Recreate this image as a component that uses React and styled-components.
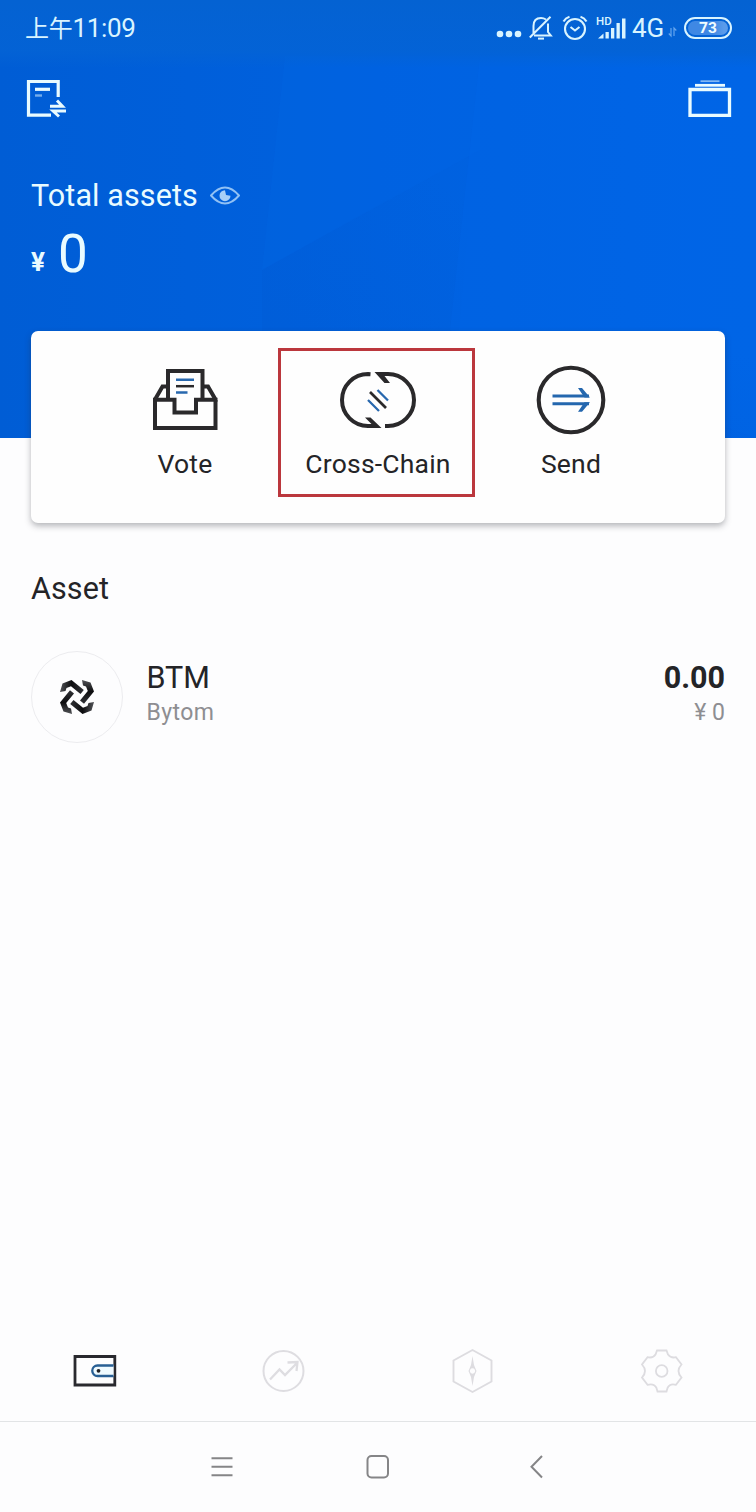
import React from 'react';
import styled, { createGlobalStyle } from 'styled-components';

const Global = createGlobalStyle`
  * { box-sizing: border-box; }
  body { margin: 0; background: #fdfdfe; font-family: Roboto, "Noto Sans CJK SC", sans-serif; color: #242427; }
  svg { display: block; flex: none; }
`;

const Screen = styled.div`
  width: 756px;
  height: 1512px;
  display: flex;
  flex-direction: column;
  background: #fdfdfe;
  overflow: hidden;
`;

const Hero = styled.header`
  position: relative;
  isolation: isolate;
  flex: none;
  height: 438px;
  display: flex;
  flex-direction: column;
  color: #e9fbff;
  background: #0061e0;
`;

const Facets = styled.svg`
  position: absolute;
  inset: 0;
  z-index: -1;
`;

const StatusBar = styled.div`
  height: 56px;
  padding: 0 24px 2px 25px;
  display: flex;
  align-items: center;
  justify-content: space-between;
`;

const Clock = styled.span`
  font-size: 26px;
  line-height: 30px;
  letter-spacing: -0.3px;
  color: #d9f4ff;
`;

const CjkPart = styled.span`
  font-family: "Noto Sans CJK SC", sans-serif;
  font-size: 24px;
`;

const StatusIcons = styled.div`
  padding-top: 1px;
  display: flex;
  align-items: center;
  color: #d9f4ff;
`;

const Network = styled.span`
  margin-left: 4px;
  width: 36px;
  font-size: 26px;
  line-height: 30px;
  font-weight: 400;
  white-space: nowrap;
`;

const SignalGroup = styled.div`
  position: relative;
  margin-left: 8px;
  width: 32px;
  height: 24px;
  display: flex;
  align-items: flex-end;
`;

const Hd = styled.span`
  position: absolute;
  left: 0;
  top: 0;
  font-size: 11.5px;
  line-height: 10px;
  font-weight: 500;
`;

const Battery = styled.div`
  margin-left: 7px;
  width: 48px;
  height: 22px;
  border: 2px solid #d9f4ff;
  border-radius: 11px;
  padding: 2px;
  display: flex;
`;

const Charge = styled.div`
  flex: 1;
  border-radius: 8px;
  background: linear-gradient(90deg, #3f88e4 60%, #5a9bea 90%);
  display: flex;
  align-items: center;
  justify-content: center;
  font-size: 15.5px;
  line-height: 14px;
  font-weight: 700;
  color: #f0fdff;
`;

const Toolbar = styled.div`
  margin-top: 23px;
  padding: 0 24px 0 26px;
  height: 40px;
  display: flex;
  justify-content: space-between;
`;

const Totals = styled.div`
  padding: 56px 31px 0;
`;

const TotalLabel = styled.div`
  display: flex;
  align-items: center;
  gap: 12px;
  height: 40px;
  font-size: 30.5px;
  letter-spacing: 0.1px;
`;

const TotalValue = styled.div`
  margin-top: 9px;
  display: flex;
  align-items: baseline;
  font-size: 53px;
  line-height: 60px;
`;

const Yen = styled.span`
  width: 27px;
  font-size: 26px;
  font-weight: 700;
  position: relative;
  top: -1px;
`;

const Card = styled.section`
  flex: none;
  position: relative;
  margin: -107px 31px 0;
  height: 192px;
  border-radius: 7px;
  background: #fefefe;
  box-shadow: 0 3px 6px rgba(40, 44, 52, 0.34);
  display: flex;
  justify-content: center;
`;

const Action = styled.div`
  position: relative;
  width: 193px;
  padding-top: 32px;
  display: flex;
  flex-direction: column;
  align-items: center;
  font-size: 26.5px;
  line-height: 30px;
  letter-spacing: 0.2px;
`;

const ActionIcon = styled.div`
  height: 74px;
  margin-bottom: 12px;
  display: flex;
  align-items: center;
`;

const Highlight = styled.div`
  position: absolute;
  left: -4px;
  top: 17px;
  width: 197px;
  height: 149px;
  border: 3px solid #bb373d;
`;

const AssetSection = styled.main`
  flex: 1;
  padding: 46px 31px 0;
`;

const SectionTitle = styled.h2`
  margin: 0;
  font-size: 30.5px;
  line-height: 40px;
  font-weight: 400;
  letter-spacing: 0.1px;
`;

const AssetRow = styled.div`
  margin-top: 42px;
  height: 92px;
  display: flex;
`;

const CoinBadge = styled.div`
  width: 92px;
  height: 92px;
  border: 1.5px solid #ececef;
  border-radius: 50%;
  display: flex;
  align-items: center;
  justify-content: center;
`;

const Stack = styled.div`
  padding-top: 7px;
  margin-left: ${(p) => (p.$end ? 'auto' : '23.5px')};
  display: flex;
  flex-direction: column;
  align-items: ${(p) => (p.$end ? 'flex-end' : 'flex-start')};
`;

const Primary = styled.span`
  font-size: 30.5px;
  line-height: 40px;
  font-weight: ${(p) => (p.$bold ? 700 : 400)};
`;

const Secondary = styled.span`
  font-size: 23px;
  line-height: 30px;
  letter-spacing: ${(p) => p.$tracking || 0}px;
  color: #8e8e92;
`;

const Tabs = styled.nav`
  height: 101px;
  display: grid;
  grid-template-columns: repeat(4, 1fr);
  align-items: center;
  justify-items: center;
  border-bottom: 1px solid #e2e4e6;
`;

const SystemNav = styled.footer`
  height: 90px;
  padding: 0 210px 1px 209px;
  display: grid;
  grid-template-columns: 1fr auto 1fr;
  align-items: center;

  & > :last-child {
    justify-self: end;
  }
`;

const Background = () => (
  <Facets width="756" height="438" viewBox="0 0 756 438">
    <defs>
      <linearGradient id="base" x1="0" y1="0" x2="1" y2="0">
        <stop offset="0" stopColor="#005dd5" />
        <stop offset="0.5" stopColor="#0061df" />
        <stop offset="1" stopColor="#0064e5" />
      </linearGradient>
      <linearGradient id="top" x1="0" y1="0" x2="0" y2="1">
        <stop offset="0" stopColor="#0462d2" />
        <stop offset="0.75" stopColor="#0463d5" stopOpacity="0.85" />
        <stop offset="1" stopColor="#0463d5" stopOpacity="0" />
      </linearGradient>
      <linearGradient id="fold" x1="0" y1="1" x2="0.7" y2="0">
        <stop offset="0" stopColor="#0059d2" stopOpacity="0.4" />
        <stop offset="1" stopColor="#0059d2" stopOpacity="0" />
      </linearGradient>
    </defs>
    <path fill="url(#base)" d="M0 0h756v438H0z" />
    <path fill="url(#fold)" d="M262 270L475 150L450 438H262z" />
    <path fill="#0068ea" opacity=".22" d="M285 56H480V150L262 270z" />
    <path fill="#0068ec" opacity=".25" d="M480 56H756V438L450 330z" />
    <path fill="url(#fold)" opacity=".6" d="M475 415L640 345L756 335V438H475z" />
    <path fill="url(#top)" d="M0 0h756v68H0z" />
  </Facets>
);

const MutedBell = () => (
  <svg width="24" height="26" viewBox="0 0 24 26" fill="none" stroke="currentColor" strokeWidth="2">
    <path d="M4.500 18V11C4.500 5.500 7.500 3 12 3C14 3 15.600 3.600 17 4.500M19 8.500V17L21.800 20.500H5M.8 22.500L21.500 1.800" />
    <path d="M9 23.600H15" strokeWidth="2" />
  </svg>
);

const Alarm = () => (
  <svg width="26" height="26" viewBox="0 0 26 26" fill="none" stroke="currentColor" strokeWidth="2.100">
    <circle cx="13" cy="14" r="10" />
    <path d="M8.500 12L13 15.500L17.500 12M1.500 6.500Q3.500 3 7.500 1.800M24.500 6.500Q22.500 3 18.500 1.800" />
  </svg>
);

const Signal = () => (
  <svg width="32" height="22" viewBox="0 0 32 22" fill="currentColor">
    <path d="M2 20.500L7.500 15.500V20.500zM9.500 14h3.300v6.500H9.500zM15 10h3.300v10.500h-3.300zM20.500 5h3.300v15.500h-3.300zM26 .5h3.500v20h-3.500z" />
  </svg>
);

const RecordIcon = () => (
  <svg width="41" height="40" viewBox="0 0 41 40" fill="none" stroke="currentColor" strokeWidth="3.200">
    <path d="M25 36.200H2.500V2.500H32.200V18" />
    <path d="M9 10.300H24" />
    <path d="M9 16.500H16" opacity=".5" strokeWidth="2.400" />
    <path d="M24 27.200H36.500L31 21.500M40 32H27L33 37.500" strokeWidth="2.900" />
  </svg>
);

const WalletsIcon = () => (
  <svg width="44" height="40" viewBox="0 0 44 40" fill="none" stroke="currentColor">
    <path d="M2 10.500H41.500V36.300H2z" strokeWidth="3.300" />
    <path d="M7 6.300H37" strokeWidth="2.800" />
    <path d="M12.500 2.200H31.500" strokeWidth="1.800" opacity=".55" />
  </svg>
);

const EyeIcon = () => (
  <svg width="30" height="20" viewBox="0 0 30 20">
    <path d="M1 10.500Q15-5.500 29 10.500Q15 26.500 1 10.500z" fill="none" stroke="#91c1f4" strokeWidth="1.900" />
    <path d="M15 5.200A5.500 5.500 0 1 0 20.500 10.700L16 10z" fill="#a6cff7" />
  </svg>
);

const VoteIcon = () => (
  <svg width="66" height="64" viewBox="0 0 66 64" fill="none" stroke="#2a292b" strokeWidth="4">
    <path d="M3 32V60H63.500V32" />
    <path d="M1 31.800H22.500V44.500H44V31.800H65.500" />
    <path d="M3 31.500L10.500 18.500H16M63.500 31.500L56 18.500H50.500" />
    <path d="M16 31.500V3H50.500V31.500" />
    <path d="M24 11.800H42M24 24.500H35.500" stroke="#2868ae" strokeWidth="2.600" />
    <path d="M24 18.200H42" strokeWidth="2.500" />
  </svg>
);

const ChainIcon = () => (
  <svg width="78" height="58" viewBox="0 0 78 58" fill="none" stroke="#2a292b" strokeWidth="4">
    <path d="M31.500 3.200L29 3A26 26 0 0 0 29 55H35" />
    <path d="M42 3H49A26 26 0 0 1 49 55L46 55" />
    <path d="M35.500 1H49V5H45.500L51 12H45.500z M42.500 57H28V53H32.500L26 46.500H31.500z" fill="#2a292b" stroke="none" />
    <path d="M31 21L47 37" strokeWidth="2.600" />
    <path d="M38.500 19L49 29.500M29 29L40 40" stroke="#2868ae" strokeWidth="2.300" />
  </svg>
);

const SendIcon = () => (
  <svg width="70" height="70" viewBox="0 0 70 70" fill="none">
    <circle cx="35" cy="35" r="32.300" stroke="#2a292b" strokeWidth="4.100" />
    <path d="M16.500 31H53M16.500 38.700H53" stroke="#2467ae" strokeWidth="3" />
    <path d="M42 23H46L54 32.500H48.500z M42 46.700H46L54 37.200H48.500z" fill="#2467ae" />
  </svg>
);

const BytomLogo = () => (
  <svg width="36" height="36" viewBox="-18 -18 36 36" fill="none">
    <defs>
      <linearGradient id="blade" gradientUnits="userSpaceOnUse" x1="-16" y1="-6" x2="5" y2="-6">
        <stop offset="0" stopColor="#4c4d51" />
        <stop offset="0.5" stopColor="#0c0c0e" />
        <stop offset="1" stopColor="#2c2d31" />
      </linearGradient>
    </defs>
    {[0, 90, 180, 270].map((turn) => (
      <path
        key={turn}
        transform={`rotate(${turn})`}
        d="M-17 -5L-14.500 -13.500L-5.500 -17L6.800 -7L3.500 -3L-6 -10.800L-10.500 -9L-11.500 -6z"
        fill="url(#blade)"
      />
    ))}
  </svg>
);

const WalletTab = () => (
  <svg width="44" height="34" viewBox="0 0 44 34" fill="none">
    <path d="M2 2.500H41.800V31H2z" stroke="#29292e" strokeWidth="2.800" />
    <path d="M40.500 11.500H24.500A5.200 5.200 0 0 0 24.500 22H40.500" fill="#effaff" stroke="#285f94" strokeWidth="2.300" />
    <circle cx="25.500" cy="16.800" r="1.900" fill="#202126" />
  </svg>
);

const TrendTab = () => (
  <svg width="44" height="44" viewBox="0 0 44 44" fill="none" stroke="#dedde1" strokeWidth="2">
    <circle cx="21.500" cy="22" r="20" />
    <path d="M8 30.500L17.500 20.500L23 26L35 14M25.500 13.500L35.500 13L34.500 22" strokeWidth="2.300" />
  </svg>
);

const CompassTab = () => (
  <svg width="42" height="46" viewBox="0 0 42 46" fill="none" stroke="#dddce0" strokeWidth="1.900">
    <path d="M20.500 2L39.500 12.500V33.500L20.500 44L1.500 33.500V12.500z" />
    <path fillRule="evenodd" d="M20.500 8L22 17L24.500 23L22 29L20.500 38L19 29L16.500 23L19 17z M20.500 20.300a2.700 2.700 0 1 0 .01 0z" fill="#dddce0" stroke="none" />
  </svg>
);

const GearTab = () => (
  <svg width="44" height="44" viewBox="-22 -22 44 44" fill="none" stroke="#dddce0" strokeWidth="1.800">
    <path d="M-5 -20.500H4.500L6 -16.500Q9 -12.500 14 -13.800L19.500 -6.500Q13.500 0 19.500 6.500L14 13.800Q8 12 5.500 17L4.500 20.500H-4.500L-5.500 17Q-8 12 -14.500 13.800L-20 6.500Q-14 0 -20 -6.500L-14.500 -13.800Q-9 -12.500 -6.500 -16.500z" />
    <circle cx="-.3" r="5.800" />
  </svg>
);

const MenuIcon = () => (
  <svg width="26" height="22" viewBox="0 0 26 22" stroke="#858587" strokeWidth="1.900">
    <path d="M2.500 2.300H23.500M2.500 10.800H23.500M2.500 19.300H23.500" />
  </svg>
);

const HomeIcon = () => (
  <svg width="24" height="24" viewBox="0 0 24 24" fill="none" stroke="#858587" strokeWidth="2">
    <rect x="1.500" y="1" width="20.500" height="21.500" rx="4" />
  </svg>
);

const BackIcon = () => (
  <svg width="18" height="24" viewBox="0 0 18 24" fill="none" stroke="#858587" strokeWidth="2">
    <path d="M14 1L3.500 11.800L14 22.500" />
  </svg>
);

export default function App() {
  return (
    <>
      <Global />
      <Screen>
        <Hero>
          <Background />
          <StatusBar>
            <Clock><CjkPart>上午</CjkPart>11:09</Clock>
            <StatusIcons>
              <svg width="26" height="24" viewBox="0 0 26 24" fill="currentColor">
                <circle cx="4" cy="18" r="3.300" />
                <circle cx="13" cy="18" r="3.300" />
                <circle cx="22" cy="18" r="3.300" />
              </svg>
              <svg width="7" height="1" />
              <MutedBell />
              <svg width="9" height="1" />
              <Alarm />
              <SignalGroup>
                <Hd>HD</Hd>
                <Signal />
              </SignalGroup>
              <Network>4G</Network>
              <svg width="9" height="24" viewBox="0 0 9 24" fill="none" stroke="#66a6ee" strokeWidth="1.200">
                <path d="M3 12V20L.8 17.500M6 20V12L8.300 14.500" />
              </svg>
              <Battery><Charge>73</Charge></Battery>
            </StatusIcons>
          </StatusBar>
          <Toolbar>
            <RecordIcon />
            <WalletsIcon />
          </Toolbar>
          <Totals>
            <TotalLabel>Total assets <EyeIcon /></TotalLabel>
            <TotalValue><Yen>¥</Yen>0</TotalValue>
          </Totals>
        </Hero>
        <Card>
          <Action>
            <ActionIcon><VoteIcon /></ActionIcon>
            Vote
          </Action>
          <Action>
            <ActionIcon><ChainIcon /></ActionIcon>
            Cross-Chain
            <Highlight />
          </Action>
          <Action>
            <ActionIcon><SendIcon /></ActionIcon>
            Send
          </Action>
        </Card>
        <AssetSection>
          <SectionTitle>Asset</SectionTitle>
          <AssetRow>
            <CoinBadge><BytomLogo /></CoinBadge>
            <Stack>
              <Primary>BTM</Primary>
              <Secondary $tracking={0.4}>Bytom</Secondary>
            </Stack>
            <Stack $end>
              <Primary $bold>0.00</Primary>
              <Secondary>¥ 0</Secondary>
            </Stack>
          </AssetRow>
        </AssetSection>
        <Tabs>
          <WalletTab />
          <TrendTab />
          <CompassTab />
          <GearTab />
        </Tabs>
        <SystemNav>
          <MenuIcon />
          <HomeIcon />
          <BackIcon />
        </SystemNav>
      </Screen>
    </>
  );
}
